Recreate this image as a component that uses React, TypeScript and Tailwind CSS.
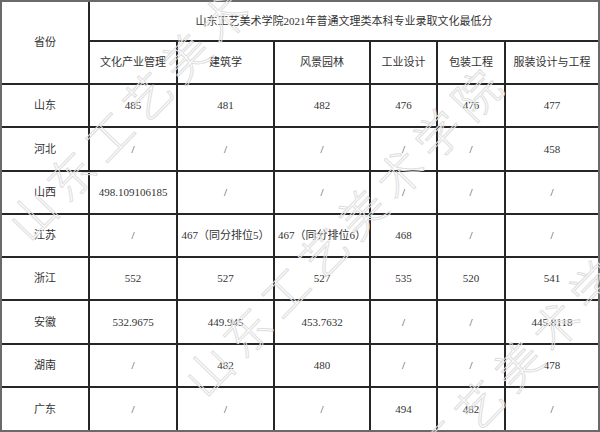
import React from "react";

const majors = ["文化产业管理", "建筑学", "风景园林", "工业设计", "包装工程", "服装设计与工程"];

const rows: string[][] = [
  ["山东", "485", "481", "482", "476", "476", "477"],
  ["河北", "/", "/", "/", "/", "/", "458"],
  ["山西", "498.109106185", "/", "/", "/", "/", "/"],
  ["江苏", "/", "467（同分排位5）", "467（同分排位6）", "468", "/", "/"],
  ["浙江", "552", "527", "527", "535", "520", "541"],
  ["安徽", "532.9675", "449.945", "453.7632", "/", "/", "445.8118"],
  ["湖南", "/", "482", "480", "/", "/", "478"],
  ["广东", "/", "/", "/", "494", "482", "/"],
];

const cell = "bg-white flex items-center justify-center text-[11px] text-[#333333] whitespace-nowrap leading-none";

export default function App() {
  return (
    <div
      className="relative w-[600px] h-[432px] overflow-hidden bg-white"
      style={{ fontFamily: '"Liberation Serif", "Noto Sans CJK SC", serif' }}
    >
      <div className="w-[600px] h-[432px] border-2 border-[#6a6a6a] bg-[#262626]">
        <div className="grid gap-[2px] grid-cols-[86px_86px_95px_94px_65px_66px_92px] grid-rows-[38px_41px_41px_42px_41px_41px_41px_42px_41px_42px]">
          <div className={`${cell} row-span-2`}>省份</div>
          <div className={`${cell} col-span-6`}>山东工艺美术学院2021年普通文理类本科专业录取文化最低分</div>
          {majors.map((m) => (
            <div key={m} className={cell}>
              {m}
            </div>
          ))}
          {rows.map((r) =>
            r.map((v, i) => (
              <div key={r[0] + i} className={cell}>
                {v}
              </div>
            ))
          )}
        </div>
      </div>
      <div className="pointer-events-none absolute inset-0">
        {[
          { l: "left-[168px]", t: "top-[72px]" },
          { l: "left-[344px]", t: "top-[228px]" },
          { l: "left-[500px]", t: "top-[380px]" },
        ].map((p, i) => (
          <div
            key={i}
            className={`absolute ${p.l} ${p.t} -translate-x-1/2 -translate-y-1/2 -rotate-[46deg] whitespace-nowrap text-[46px] font-light leading-none tracking-[9px] text-transparent [-webkit-text-stroke:1px_#dedede]`}
            style={{ fontFamily: '"Noto Sans CJK SC", sans-serif' }}
          >
            山东工艺美术学院
          </div>
        ))}
      </div>
    </div>
  );
}
